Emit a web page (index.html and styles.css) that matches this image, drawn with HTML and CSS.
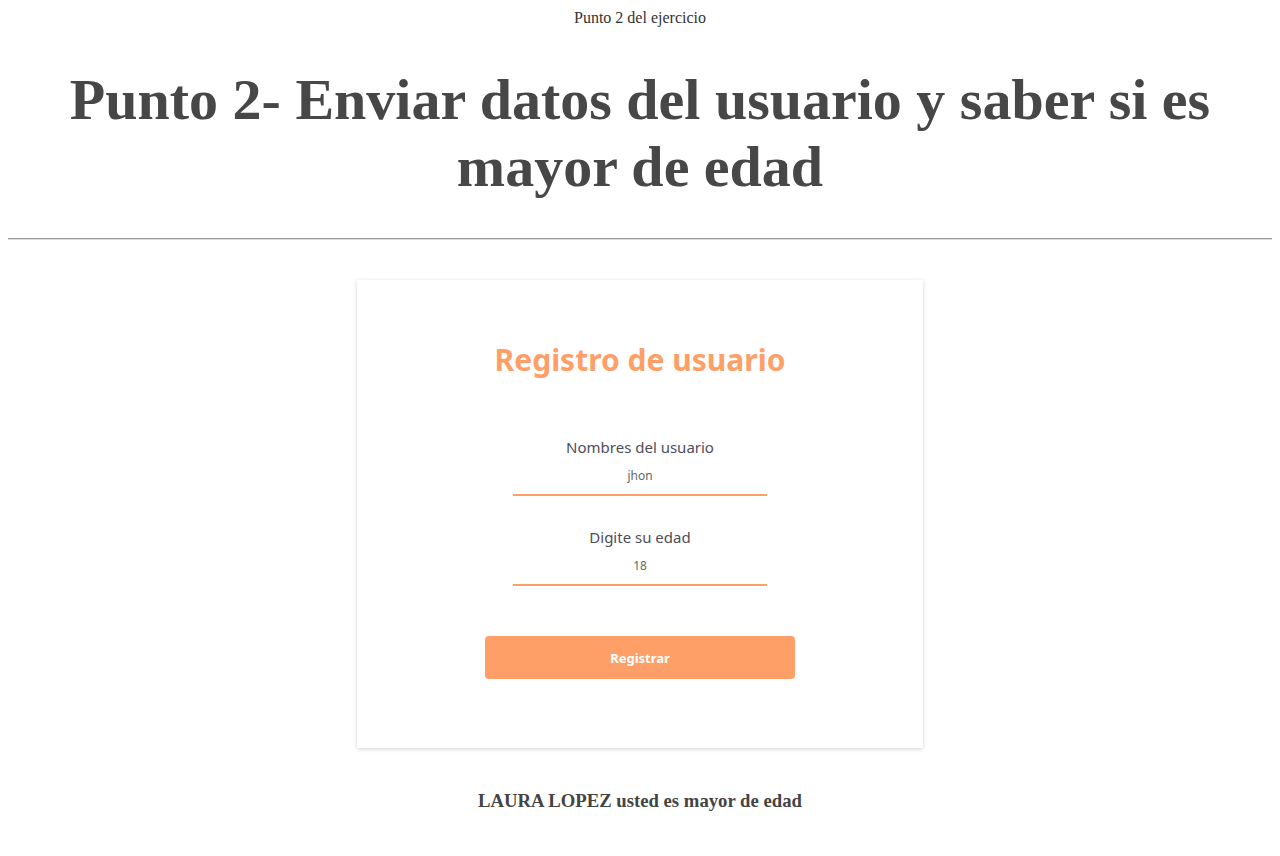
FILE: index.html
```html
<!DOCTYPE html>
<html lang="es">
<head>
<meta charset="utf-8">
<title>Punto 2</title>
<link rel="stylesheet" href="styles.css">
</head>
<body>
<p class="top">Punto 2 del ejercicio</p>
<h1 class="title">Punto 2- Enviar datos del usuario y saber si es mayor de edad</h1>
<hr class="sep">
<div class="card">
  <h2 class="card-title">Registro de usuario</h2>
  <div class="field">
    <label class="label">Nombres del usuario</label>
    <div class="input">jhon</div>
  </div>
  <div class="field">
    <label class="label">Digite su edad</label>
    <div class="input">18</div>
  </div>
  <button class="btn">Registrar</button>
</div>
<p class="result">LAURA LOPEZ usted es mayor de edad</p>
</body>
</html>
```
FILE: styles.css
```css
body {
  margin: 8px;
  font-family: "Liberation Serif", serif;
  color: #444;
  background: #fff;
}
.top {
  margin: 0;
  padding-top: 1px;
  text-align: center;
  font-size: 16px;
  color: #333;
}
.title {
  margin: 39px 0 0;
  text-align: center;
  font-size: 58px;
  line-height: 67px;
  font-weight: bold;
  color: #474747;
}
.sep {
  margin: 38px 0 0;
  border: 0;
  border-top: 1px solid #999;
  border-bottom: 1px solid #ddd;
}
.card {
  width: 566px;
  height: 468px;
  box-sizing: border-box;
  margin: 40px auto 0;
  background: #fff;
  box-shadow: 0 1px 4px rgba(0,0,0,0.18);
  display: flex;
  flex-direction: column;
  align-items: center;
  padding-top: 60px;
  font-family: "Noto Sans", sans-serif;
}
.card-title {
  margin: 0;
  color: #ff9f68;
  font-size: 30px;
  font-weight: bold;
  line-height: 40px;
}
.field {
  width: 254px;
  display: flex;
  flex-direction: column;
  align-items: center;
  margin-top: 56px;
}
.field + .field {
  margin-top: 30px;
}
.label {
  font-size: 15px;
  color: #4d4d57;
  line-height: 22px;
}
.input {
  width: 100%;
  box-sizing: border-box;
  text-align: center;
  font-size: 12px;
  color: #666;
  padding: 9px 0 10px;
  border-bottom: 2px solid #ff9f68;
}
.btn {
  margin-top: 50px;
  width: 310px;
  height: 43px;
  border: 0;
  border-radius: 4px;
  background: #ff9f68;
  color: #fff;
  font-family: "Noto Sans", sans-serif;
  font-weight: bold;
  font-size: 13px;
}
.result {
  margin: 42px 0 0;
  text-align: center;
  font-weight: bold;
  font-size: 18.72px;
  color: #444;
}
```
